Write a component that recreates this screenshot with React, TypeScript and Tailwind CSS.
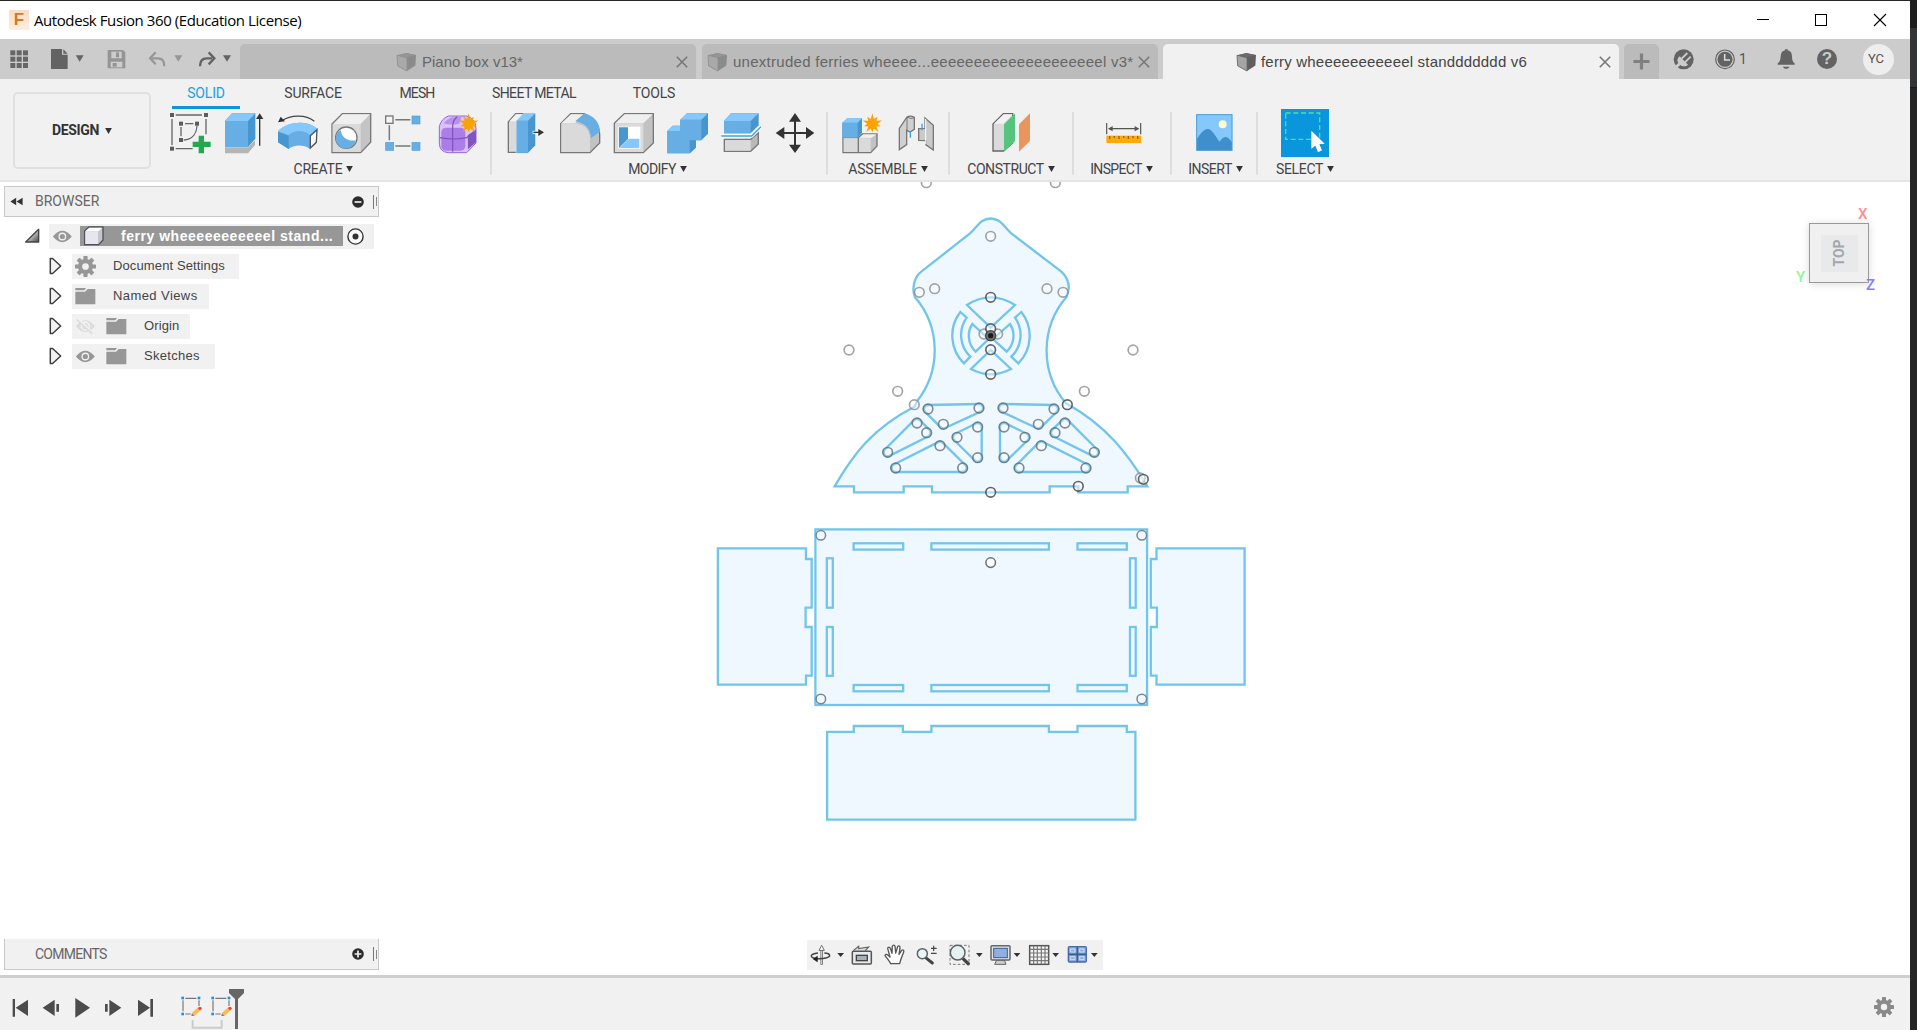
import React from "react";

type SvgProps = { box: string; className: string; children: React.ReactNode };

const Svg = ({ box, className, children }: SvgProps) => (
  <svg viewBox={box} className={`block shrink-0 ${className}`} fill="none">
    {children}
  </svg>
);

const Caret = () => (
  <svg viewBox="0 0 9 8" className="block h-[6px] w-[7px] shrink-0 fill-[#333]">
    <path d="M0 0H9L4.5 8Z" />
  </svg>
);

/* ---------- title bar ---------- */

const TitleBar = () => (
  <header className="flex h-[38px] shrink-0 items-center bg-white">
    <div className="ml-[9px] flex h-5 w-5 items-center justify-center bg-gradient-to-b from-[#fadcc2] to-[#fdeee2]">
      <span className="pb-px text-[17px] leading-[18px] font-bold text-[#d07a2c]">F</span>
    </div>
    <span className="ml-[5px] font-['Open_Sans','Noto_Sans',sans-serif] text-[15px] tracking-[-0.42px] whitespace-pre text-black">
      Autodesk Fusion 360 (Education License)
    </span>
    <div className="ml-auto flex items-center">
      <Svg box="0 0 59 38" className="h-[38px] w-[59px]">
        <path d="M23 18.5H35" stroke="#000" />
      </Svg>
      <Svg box="0 0 59 38" className="h-[38px] w-[59px]">
        <rect x="22.5" y="13.5" width="11" height="11" stroke="#000" />
      </Svg>
      <Svg box="0 0 58 38" className="h-[38px] w-[58px]">
        <path d="M22 13L34 25M34 13L22 25" stroke="#000" strokeWidth="1.1" />
      </Svg>
    </div>
  </header>
);

/* ---------- document tabs ---------- */

const CubeIcon = ({ active }: { active?: boolean }) => (
  <Svg box="827 63 63 62" className="h-[20px] w-[21px]">
    <path d="M829 73L858 66L888 72L886 105L860 122L831 106Z" fill={active ? "#5f5f5f" : "#8b8b8b"} />
    <path d="M829 73L860 81L860 122L831 106Z" fill={active ? "#a5a5a5" : "#a9a9a9"} stroke={active ? "#6b6b6b" : "#909090"} strokeWidth="2.5" />
    <path d="M831 73L858 67L886 72L860 80Z" fill={active ? "#6a6a6a" : "#949494"} />
  </Svg>
);

const CloseX = ({ className }: { className: string }) => (
  <svg viewBox="0 0 12 12" className={`h-3 w-3 shrink-0 ${className}`}>
    <path d="M0.8 0.8L11.2 11.2M11.2 0.8L0.8 11.2" strokeWidth="1.6" />
  </svg>
);

const QuickTools = () => (
  <div className="flex h-[40px] w-[240px] shrink-0 items-center">
    <Svg box="0 118 120 118" className="h-[40px] w-[40px]">
      {[151, 170, 189].map((y) =>
        [31, 50, 69].map((x) => <rect key={`${x}-${y}`} x={x} y={y} width="15" height="15" fill="#666" />)
      )}
    </Svg>
    <Svg box="120 118 168 118" className="h-[40px] w-[56px]">
      <path d="M153 147H186V164H203V207H153Z" fill="#636363" />
      <path d="M190 148L203 161H190Z" fill="#636363" />
      <path d="M227 166H251L239 185Z" fill="#666" />
    </Svg>
    <Svg box="288 118 132 118" className="h-[40px] w-[44px]">
      <path d="M323 150H369L376 157V205H323Z" fill="#949494" />
      <rect x="334" y="155" width="31" height="20" fill="#ccc" />
      <rect x="348" y="157" width="9" height="15" fill="#949494" />
      <rect x="332" y="185" width="35" height="17" fill="#ccc" />
      <rect x="338" y="189" width="12" height="11" fill="#949494" />
    </Svg>
    <Svg box="420 118 150 118" className="h-[40px] w-[50px]">
      <path d="M455 175H474C488 175 493 186 493 199" stroke="#969696" strokeWidth="6.5" />
      <path d="M467 157L450 175L467 193" stroke="#969696" strokeWidth="6.5" />
      <path d="M523 166H547L535 185Z" fill="#969696" />
    </Svg>
    <Svg box="570 118 150 118" className="h-[40px] w-[50px]">
      <path d="M636 175H620C606 175 600 184 600 199" stroke="#636363" strokeWidth="7" />
      <path d="M626 157L643 175L626 193" stroke="#636363" strokeWidth="7" />
      <path d="M669 166H693L681 185Z" fill="#636363" />
    </Svg>
  </div>
);

const TabBar = () => (
  <nav className="flex h-[40px] shrink-0 items-stretch bg-[#ccc]">
    <QuickTools />
    <div className="mt-[5px] flex w-[456px] shrink-0 items-center rounded-t-[5px] bg-[#bbb] pl-[156px] text-[#666]">
      <CubeIcon />
      <span className="ml-[5px] pt-[2px] text-[15px] whitespace-pre">Piano box v13*</span>
      <CloseX className="mr-[8px] ml-auto stroke-[#777]" />
    </div>
    <div className="mt-[5px] ml-[6px] flex w-[456px] shrink-0 items-center rounded-t-[5px] bg-[#bbb] pl-[5px] text-[#666]">
      <CubeIcon />
      <span className="ml-[5px] pt-[2px] text-[15px] tracking-[0.27px] whitespace-pre">unextruded ferries wheeee...eeeeeeeeeeeeeeeeeeeel v3*</span>
      <CloseX className="mr-[8px] ml-auto stroke-[#777]" />
    </div>
    <div className="mt-[5px] ml-[5px] flex w-[456px] shrink-0 items-center rounded-t-[5px] bg-[#f1f1f1] pl-[73px] text-[#444]">
      <CubeIcon active />
      <span className="ml-[4px] pt-[2px] text-[15px] tracking-[0.19px] whitespace-pre">ferry wheeeeeeeeeeel standdddddd v6</span>
      <CloseX className="mr-[8px] ml-auto stroke-[#777]" />
    </div>
    <div className="mt-[5px] ml-[5px] flex w-[35px] shrink-0 items-center justify-center rounded-t-[5px] bg-[#bbb]">
      <Svg box="0 0 18 18" className="h-[17px] w-[17px]">
        <path d="M9 0.5V17.5M0.5 9H17.5" stroke="#808080" strokeWidth="3.4" />
      </Svg>
    </div>
    <div className="flex items-center">
      <Svg box="666 118 150 118" className="h-[40px] w-[50px]">
        <circle cx="740" cy="178" r="30" fill="#636363" />
        <path d="M728 169L753 194C747 201 735 200 730 195L718 206L712 200L724 189C719 183 721 174 728 169Z" fill="#ccc" />
        <path d="M734 176L751 159M744 187L761 170" stroke="#ccc" strokeWidth="5.5" />
      </Svg>
      <Svg box="816 118 90 118" className="h-[40px] w-[30px]">
        <circle cx="864" cy="178" r="28" stroke="#636363" strokeWidth="3.5" />
        <circle cx="864" cy="178" r="22.5" fill="#636363" />
        <path d="M863 162V180H879" stroke="#ddd" strokeWidth="4.5" />
      </Svg>
      <span className="w-[31px] font-['Roboto',sans-serif] text-[14px] text-[#555]">1</span>
      <Svg box="999 118 105 118" className="h-[40px] w-[35px]">
        <path d="M1022 194V190C1032 184 1030 172 1032 162C1034 154 1041 153 1044 151V148H1052V151C1056 153 1062 154 1064 162C1066 172 1064 184 1073 190V194Z" fill="#636363" />
        <path d="M1038 200H1057C1055 208 1040 208 1038 200Z" fill="#636363" />
      </Svg>
      <div className="ml-[12px] flex h-5 w-5 items-center justify-center rounded-full bg-[#636363] text-[17px] leading-5 font-bold text-[#ccc]">?</div>
      <div className="ml-[26px] flex h-[31px] w-[31px] items-center justify-center rounded-full bg-[#eee] pr-[5px] font-['Roboto',sans-serif] text-[13px] text-[#555]">
        YC
      </div>
    </div>
  </nav>
);

/* ---------- ribbon ---------- */

const RIcon = ({ x, y = 245, children }: { x: number; y?: number; children: React.ReactNode }) => (
  <Svg box={`${x} ${y} 162 126`} className="h-[42px] w-[54px]">
    {children}
  </Svg>
);

const Star = ({ x, y }: { x: number; y: number }) => {
  const pts = Array.from({ length: 20 }, (_, i) => {
    const r = i % 2 ? 15 : i % 4 ? 26 : 31;
    const a = (i * Math.PI) / 10 - Math.PI / 2;
    return `${x + r * Math.cos(a)},${y + r * Math.sin(a)}`;
  }).join(" ");
  return <polygon points={pts} fill="#f9a200" />;
};

type GroupProps = { label: string; className: string; labelClass?: string; children: React.ReactNode };

const Group = ({ label, className, labelClass = "tracking-[-0.2px]", children }: GroupProps) => (
  <section className={`flex shrink-0 flex-col ${className}`}>
    <div className="flex h-[48px] items-center justify-center">{children}</div>
    <div className="mt-[3px] flex items-center justify-center gap-[4px] font-['Roboto',sans-serif] text-[14px] leading-[18px] text-[#444]">
      <span className={`whitespace-pre ${labelClass}`}>{label}</span>
      <Caret />
    </div>
  </section>
);

const Sep = ({ className = "" }: { className?: string }) => (
  <div className={`mt-[3px] h-[63px] w-[2px] shrink-0 bg-[#dedede] ${className}`} />
);

const CreateIcons = () => (
  <>
    <RIcon x={486} y={335}>
      <path d="M527 344H606M516 356V434M618 356V402M527 445H578" stroke="#666" strokeWidth="4" />
      <path d="M555 370H580M543 380V408M591 376C590 396 580 417 551 419" stroke="#666" strokeWidth="4" />
      {[[516, 344], [618, 344], [516, 445], [543, 370], [591, 370], [543, 419]].map(([x, y]) => (
        <rect key={`${x}${y}`} x={x - 6} y={y - 6} width="12" height="12" fill="#5c5c5c" />
      ))}
      <path d="M604 406V459M578 432H632" stroke="#22a84f" strokeWidth="16" />
    </RIcon>
    <RIcon x={648} y={335}>
      <path d="M675 441H744L765 420V434L744 459H675Z" fill="#b5b5b5" />
      <path d="M675 362L696 339H766V415L744 440H675Z" fill="#4896cf" />
      <rect x="675" y="362" width="69" height="78" fill="#66aee4" />
      <path d="M675 362L696 339H766L744 362Z" fill="#85c8fb" />
      <path d="M779 436V346" stroke="#333" strokeWidth="4" />
      <path d="M768 356L779 339L790 356Z" fill="#333" />
    </RIcon>
    <RIcon x={810} y={335}>
      <path d="M846 361C870 345 915 340 943 363" stroke="#444" strokeWidth="4" />
      <path d="M834 366L842 349L855 363Z" fill="#333" />
      <path d="M834 393C860 362 925 358 952 386L946 432L929 445C912 432 880 432 866 446L834 426Z" fill="#66aee4" />
      <path d="M834 393C860 362 925 358 952 386L930 404C910 388 885 388 866 404Z" fill="#85c8fb" />
      <path d="M834 395L866 406V446L834 426Z" fill="#4896cf" />
      <path d="M931 406L951 388L949 426L931 443Z" fill="#fafafa" stroke="#555" strokeWidth="4" />
    </RIcon>
    <RIcon x={972} y={335}>
      <path d="M996 371L1027 340H1112V426L1082 457H996Z" fill="#c4c4c4" stroke="#777" strokeWidth="4" />
      <path d="M1000 371L1028 342H1110L1082 371Z" fill="#efefef" />
      <rect x="998" y="371" width="84" height="84" fill="#dadada" />
      <circle cx="1039" cy="412" r="32" fill="#fff" stroke="#777" strokeWidth="4" />
      <path d="M1022 389A30 30 0 1 0 1067 420C1044 424 1024 412 1022 389Z" fill="#66aee4" />
    </RIcon>
    <RIcon x={1134} y={335}>
      <path d="M1186 358H1231M1168 375V420M1186 437H1231" stroke="#777" strokeWidth="4.5" />
      <rect x="1157" y="347" width="22" height="22" fill="#f5f5f5" stroke="#777" strokeWidth="4" />
      <g fill="#66aee4" stroke="#569ed5" strokeWidth="2">
        <rect x="1236" y="347" width="24" height="24" />
        <rect x="1157" y="426" width="24" height="24" />
        <rect x="1236" y="426" width="24" height="24" />
      </g>
    </RIcon>
    <RIcon x={1296} y={335}>
      <path d="M1345 347H1400Q1428 355 1428 385V428L1400 457H1345Q1318 455 1318 428V378Q1324 355 1345 347Z" fill="#d9c3f8" stroke="#9468d2" strokeWidth="3" />
      <path d="M1403 405L1428 388V426L1404 447Z" fill="#8254c0" />
      <rect x="1324" y="382" width="72" height="69" rx="14" fill="#ab7de8" />
      <path d="M1330 369Q1345 354 1358 351H1384L1378 370Q1352 376 1330 369Z" fill="#b890ee" />
      <path d="M1372 349Q1358 358 1358 380V454M1319 412Q1360 420 1400 412L1427 390" stroke="#8052bd" strokeWidth="3.5" />
      <Star x={1406} y={370} />
    </RIcon>
  </>
);

const ModifyIcons = () => (
  <>
    <RIcon x={54}>
      <path d="M85 275L107 250H130V366H85Z" fill="#dadada" stroke="#777" strokeWidth="4" />
      <path d="M88 273L108 252H130L112 273Z" fill="#f2f2f2" />
      <path d="M109 271L131 249H167V345L144 369H109Z" fill="#4896cf" stroke="#f5f5f5" strokeWidth="2" />
      <rect x="110" y="272" width="34" height="95" fill="#66aee4" />
      <path d="M110 271L131 249H166L144 271Z" fill="#85c8fb" />
      <path d="M158 306H180" stroke="#fff" strokeWidth="9" />
      <path d="M160 306H180" stroke="#333" strokeWidth="4" />
      <path d="M175 296L192 306L175 317Z" fill="#333" />
    </RIcon>
    <RIcon x={216}>
      <path d="M242 280L272 250H312Q356 268 359 312V338L330 367H242Z" fill="#c2c2c2" stroke="#777" strokeWidth="4" />
      <path d="M244 279L273 252H312L286 278Z" fill="#efefef" />
      <path d="M244 279H286Q328 285 330 324V365H244Z" fill="#dadada" />
      <path d="M286 273L313 249Q358 262 360 304L333 323Q330 280 286 273Z" fill="#66aee4" />
    </RIcon>
    <RIcon x={378}>
      <path d="M403 279L433 250H520V338L490 367H403Z" fill="#c2c2c2" stroke="#777" strokeWidth="4" />
      <path d="M406 279L434 252H518L490 279Z" fill="#efefef" />
      <rect x="405" y="279" width="85" height="86" fill="#dadada" />
      <rect x="415" y="289" width="66" height="66" fill="#fff" />
      <path d="M417 291H444V326L417 353Z" fill="#4896cf" />
      <path d="M419 353L446 325H478V353Z" fill="#85c8fb" />
    </RIcon>
    <RIcon x={540}>
      <path d="M562 302L578 286H601V268L621 249H684V310L664 330H648V352L630 369H562Z" fill="#4896cf" />
      <path d="M562 302H601V268H664V330H629V369H562Z" fill="#66aee4" />
      <path d="M562 302L578 286H601V302ZM601 268L621 249H684L664 268Z" fill="#85c8fb" />
    </RIcon>
    <RIcon x={702}>
      <path d="M732 272L753 249H836V285L812 309H732Z" fill="#4896cf" />
      <path d="M732 272H812V309H732Z" fill="#66aee4" />
      <path d="M732 272L753 249H836L812 272Z" fill="#85c8fb" />
      <path d="M733 327H812L835 307V341L812 363H733Z" fill="#b9b9b9" stroke="#777" strokeWidth="4" />
      <path d="M735 329H812V361H735Z" fill="#dadada" />
      <path d="M724 317H815L843 289" stroke="#fff" strokeWidth="10" />
      <path d="M724 317H815L843 289" stroke="#3f9ede" strokeWidth="4" />
    </RIcon>
    <RIcon x={864}>
      <path d="M945 265V352M903 308H988" stroke="#333" strokeWidth="6" />
      <path d="M945 248L963 274H927ZM945 368L963 343H927ZM887 308L913 290V326ZM1003 308L978 290V326Z" fill="#333" />
    </RIcon>
  </>
);

const AssembleIcons = () => (
  <>
    <RIcon x={1065}>
      <path d="M1089 322H1135L1147 311H1191V347L1172 367H1089Z" fill="#c2c2c2" stroke="#777" strokeWidth="4" />
      <path d="M1091 324H1134V365H1091ZM1137 324H1172V365H1137Z" fill="#dadada" />
      <path d="M1138 322L1150 312H1190L1174 323Z" fill="#efefef" />
      <path d="M1135 322V367" stroke="#777" strokeWidth="4" />
      <path d="M1087 277L1103 263H1146V308L1133 322H1087Z" fill="#4896cf" />
      <rect x="1087" y="277" width="46" height="45" fill="#66aee4" />
      <path d="M1087 277L1103 263H1147L1133 277Z" fill="#85c8fb" />
      <Star x={1177} y={280} />
    </RIcon>
    <RIcon x={1227}>
      <path d="M1258 294L1281 260Q1291 254 1303 261V297L1290 305L1280 300V343L1258 358Z" fill="#d0d0d0" stroke="#777" strokeWidth="4" />
      <path d="M1281 260Q1292 268 1303 262M1281 260V300" stroke="#777" strokeWidth="3" />
      <path d="M1335 263L1360 285V359L1337 343V331L1316 330V295L1335 294Z" fill="#cacaca" stroke="#777" strokeWidth="4" />
      <path d="M1337 266V342" stroke="#fff" strokeWidth="3" />
      <path d="M1291 302V322M1326 280V300" stroke="#3f9ede" strokeWidth="4" />
    </RIcon>
  </>
);

const RIBBON_TABS: [string, string][] = [
  ["SURFACE", "w-[146px] tracking-[-0.2px]"],
  ["MESH", "w-[62px] tracking-[-0.9px]"],
  ["SHEET METAL", "w-[172px] tracking-[-0.6px]"],
  ["TOOLS", "w-[68px] tracking-[-0.2px]"],
];

const Ribbon = () => (
  <div className="flex h-[103px] shrink-0 border-b-2 border-[#e4e4e4] bg-[#f1f1f1]">
    <button className="mt-[13px] ml-[13px] flex h-[77px] w-[138px] shrink-0 items-center justify-center gap-[6px] rounded-[5px] border-2 border-[#e0e0e0] font-['Roboto',sans-serif] text-[14px] font-bold text-[#333]">
      <span className="tracking-[-0.35px] whitespace-pre">DESIGN</span>
      <Caret />
    </button>
    <div className="ml-[11px] flex flex-col">
      <div className="flex h-[30px] items-stretch pl-[10px] font-['Roboto',sans-serif] text-[14px] text-[#444]">
        <div className="flex w-[68px] items-center justify-center border-b-[3px] border-[#0a96d9] pt-px tracking-[-0.2px] text-[#1ba0df]">
          SOLID
        </div>
        {RIBBON_TABS.map(([name, w]) => (
          <div key={name} className={`flex items-center justify-center border-b-[3px] border-transparent pt-px whitespace-pre ${w}`}>
            {name}
          </div>
        ))}
      </div>
      <div className="flex">
        <Group label="CREATE" className="w-[324px]" labelClass="-ml-px tracking-[-0.25px]"><CreateIcons /></Group>
        <Sep className="ml-[4px]" />
        <Group label="MODIFY" className="ml-[6px] w-[324px]" labelClass="-ml-[5px] tracking-[-0.55px]"><ModifyIcons /></Group>
        <Sep className="ml-[4px]" />
        <Group label="ASSEMBLE" className="ml-[7px] w-[108px]" labelClass="-ml-[2px] tracking-[-0.2px]"><AssembleIcons /></Group>
        <Sep className="ml-[5px]" />
        <Group label="CONSTRUCT" className="w-[122px]" labelClass="tracking-[-0.42px]">
          <RIcon x={72}>
            <path d="M99 281L130 250H158V338L130 362H99Z" fill="#dadada" stroke="#666" strokeWidth="4" />
            <path d="M102 280L131 252H158L130 280Z" fill="#f2f2f2" />
            <path d="M132 282L165 249V332L132 364Z" fill="#56c47e" />
            <path d="M177 282L210 249V332L177 364Z" fill="#e8965c" />
          </RIcon>
        </Group>
        <Sep />
        <Group label="INSPECT" className="w-[97px]" labelClass="-ml-[2px] tracking-[-0.65px]">
          <RIcon x={405}>
            <path d="M437 278V312M539 278V312M445 295H531" stroke="#555" strokeWidth="3.5" />
            <path d="M441 295L455 287V303ZM535 295L521 287V303Z" fill="#555" />
            <rect x="436" y="316" width="104" height="22" fill="#ffa90a" />
            <path d="M446 317V326M460 317V323M474 317V326M488 317V323M502 317V326M516 317V323M530 317V326" stroke="#9a6500" strokeWidth="4" />
          </RIcon>
        </Group>
        <Sep className="-ml-px" />
        <Group label="INSERT" className="w-[84px]" labelClass="ml-[3px] tracking-[-0.5px]">
          <RIcon x={681}>
            <rect x="709" y="252" width="108" height="109" fill="#85c8fb" />
            <path d="M711 326C728 300 735 296 745 296C758 299 766 318 779 334C787 322 792 320 797 320C806 321 811 330 816 336V360H711Z" fill="#3f8fcb" />
            <circle cx="788" cy="282" r="12" fill="#ffffd0" />
            <rect x="710" y="253" width="106" height="107" stroke="#4f9dd4" strokeWidth="3" />
          </RIcon>
        </Group>
        <Sep />
        <Group label="SELECT" className="w-[94px]" labelClass="tracking-[-0.3px]">
          <Svg box="963 237 144 144" className="h-[48px] w-[48px]">
            <rect x="963" y="237" width="144" height="144" fill="#0a96dc" />
            <rect x="977" y="249" width="102" height="79" stroke="#57dd9c" strokeWidth="4" strokeDasharray="15 8" />
            <path d="M1054 302V356L1066 347L1074 367L1086 361L1078 343L1094 341Z" fill="#fff" />
          </Svg>
        </Group>
      </div>
    </div>
  </div>
);

/* ---------- browser panel ---------- */

const Eye = ({ className }: { className: string }) => (
  <Svg box="157 145 63 46" className="h-[15px] w-[21px]">
    <g className={className}>
      <path d="M159 168Q188 133 217 168Q188 203 159 168Z" fill="currentColor" />
      <circle cx="188" cy="168" r="10" stroke="#f1f1f1" strokeWidth="4" />
    </g>
  </Svg>
);

const EyeOff = () => (
  <Svg box="225 415 63 50" className="h-[17px] w-[21px]">
    <path d="M228 439Q256 404 285 439Q256 474 228 439Z" fill="#dcdcdc" />
    <circle cx="256" cy="439" r="12" stroke="#f1f1f1" strokeWidth="5" />
    <path d="M234 417L281 464" stroke="#f1f1f1" strokeWidth="8" />
    <path d="M230 419L277 462" stroke="#dcdcdc" strokeWidth="5" />
  </Svg>
);

const Folder = () => (
  <Svg box="225 321 63 54" className="h-[18px] w-[21px]">
    <path d="M226 324H258L253 331H226ZM226 335H255L263 327H286V373H226Z" fill="#979797" />
  </Svg>
);

const Gear = ({ className }: { className: string }) => (
  <svg viewBox="-10 -10 20 20" className={`block shrink-0 ${className}`} fill="none">
    {[0, 45, 90, 135].map((a) => (
      <rect key={a} x="-2" y="-10" width="4" height="20" rx="0.6" fill="currentColor" transform={`rotate(${a})`} />
    ))}
    <circle r="7.2" fill="currentColor" />
    <circle r="3.2" fill="#f1f1f1" />
  </svg>
);

const Expander = () => (
  <Svg box="145 232 40 54" className="mr-[10px] h-[18px] w-[13px]">
    <path d="M149 236H156L181 259L156 282H149Z" fill="#f2f2f2" stroke="#3d3d3d" strokeWidth="4.5" strokeLinejoin="round" />
  </Svg>
);

const TreeRow = ({ className, children }: { className: string; children: React.ReactNode }) => (
  <div className="flex h-[30px] items-center pl-[49px]">
    <Expander />
    <div className={`flex h-[25px] items-center bg-[#f1f1f1] pl-[3px] ${className}`}>{children}</div>
  </div>
);

const PanelGrip = ({ plus }: { plus?: boolean }) => (
  <div className="ml-auto flex items-center">
    <Svg box="0 0 12 12" className="h-3 w-3">
      <circle cx="6" cy="6" r="5.8" fill="#2b2b2b" />
      <path d={plus ? "M2.6 6H9.4M6 2.6V9.4" : "M2.6 6H9.4"} stroke="#f1f1f1" strokeWidth="1.7" />
    </Svg>
    <div className="mr-px ml-[9px] flex items-center gap-[2px]">
      <div className="h-[14px] w-px bg-[#777]" />
      <div className="h-[9px] w-px bg-[#888]" />
    </div>
  </div>
);

const Browser = () => (
  <aside className="relative w-[379px] pt-[4px]">
    <div className="ml-[4px] flex h-[31px] items-center border border-[#c9c9c9] bg-[#f1f1f1]">
      <Svg box="30 52 40 28" className="ml-[5px] h-[9px] w-[13px]">
        <path d="M31 66L49 54V78ZM50 66L69 54V78Z" fill="#333" />
      </Svg>
      <span className="ml-[12px] font-['Roboto',sans-serif] text-[14px] text-[#666]">BROWSER</span>
      <PanelGrip />
    </div>
    <div className="mt-[4px] flex h-[30px] items-center pl-[24px]">
      <Svg box="72 145 48 48" className="h-[16px] w-[16px]">
        <defs>
          <linearGradient id="open" x1="0" y1="0" x2="1" y2="1">
            <stop offset="0.3" stopColor="#eee" />
            <stop offset="1" stopColor="#444" />
          </linearGradient>
        </defs>
        <path d="M116 149V187H77Z" fill="url(#open)" stroke="#444" strokeWidth="4" strokeLinejoin="round" />
      </Svg>
      <div className="ml-[9px] flex h-[25px] w-[325px] items-center bg-[#f1f1f1] pl-[3px]">
        <Eye className="text-[#979797]" />
        <div className="ml-[7px] flex h-[20px] w-[263px] items-center bg-[#979797]">
          <Svg box="250 139 63 60" className="ml-[3px] h-[20px] w-[21px]">
            <path d="M255 154L268 142H310V181L297 195H255Z" fill="#c5c5cc" stroke="#50505a" strokeWidth="4" strokeLinejoin="round" />
            <path d="M257 155L269 144H308L296 155Z" fill="#fff" />
            <rect x="257" y="155" width="38" height="38" fill="#e6e6ee" />
          </Svg>
          <span className="ml-[17px] text-[14px] font-bold tracking-[0.53px] whitespace-pre text-white">ferry wheeeeeeeeeeel stand...</span>
        </div>
        <Svg box="0 0 17 17" className="ml-[4px] h-[17px] w-[17px]">
          <circle cx="8.5" cy="8.5" r="7.6" fill="#fafafa" stroke="#333" strokeWidth="1.4" />
          <circle cx="8.5" cy="8.5" r="3" fill="#333" />
        </Svg>
      </div>
    </div>
    <div className="text-[13px] text-[#444]">
      <TreeRow className="w-[167px]">
        <Gear className="h-[21px] w-[21px] text-[#979797]" />
        <span className="ml-[17px] tracking-[0.12px] whitespace-pre">Document Settings</span>
      </TreeRow>
      <TreeRow className="w-[137px]">
        <Folder />
        <span className="ml-[17px] tracking-[0.42px] whitespace-pre">Named Views</span>
      </TreeRow>
      <TreeRow className="w-[118px]">
        <EyeOff />
        <div className="ml-[10px]"><Folder /></div>
        <span className="ml-[17px] tracking-[0.1px]">Origin</span>
      </TreeRow>
      <TreeRow className="w-[143px]">
        <Eye className="text-[#979797]" />
        <div className="ml-[10px]"><Folder /></div>
        <span className="ml-[17px] tracking-[0.3px]">Sketches</span>
      </TreeRow>
    </div>
  </aside>
);

/* ---------- sketch geometry ---------- */

type Pt = [number, number];

/* Outline of a triangle whose corners are rounded by circles of radius r. */
const roundedTriangle = (input: Pt[], r: number): string => {
  const [a, b, c] = input;
  const area = (b[0] - a[0]) * (c[1] - a[1]) - (c[0] - a[0]) * (b[1] - a[1]);
  const p = area > 0 ? input : [a, c, b];
  let d = "";
  for (let i = 0; i < 3; i++) {
    const s = p[i];
    const e = p[(i + 1) % 3];
    const len = Math.hypot(e[0] - s[0], e[1] - s[1]);
    const nx = ((e[1] - s[1]) / len) * r;
    const ny = (-(e[0] - s[0]) / len) * r;
    d += i === 0 ? `M${s[0] + nx} ${s[1] + ny}` : `A${r} ${r} 0 0 1 ${s[0] + nx} ${s[1] + ny}`;
    d += `L${e[0] + nx} ${e[1] + ny}`;
    if (i === 2) d += `A${r} ${r} 0 0 1 ${d.slice(1, d.indexOf("L"))}Z`;
  }
  return d;
};

const TRUSSES: Pt[][] = [
  [[324, 687], [477, 684], [370, 733]],
  [[291, 729], [320, 758], [203, 817]],
  [[473, 741], [411, 772], [473, 833]],
  [[360, 797], [227, 864], [428, 864]],
  [[702, 687], [549, 684], [655, 733]],
  [[735, 729], [705, 758], [823, 817]],
  [[552, 741], [615, 772], [552, 833]],
  [[664, 797], [798, 864], [597, 864]],
];

const CONSTRUCTION: Pt[] = [
  [319, 8], [706, 8], [512, 169], [298, 337], [344, 326], [681, 326], [729, 337],
  [87, 510], [939, 510], [233, 634], [793, 634], [283, 674], [961, 894], [492, 462], [533, 462],
];

const ANCHORS: Pt[] = [[512, 352], [512, 446], [512, 509], [512, 583], [512, 937], [775, 919], [742, 674], [970, 898]];

const SLOTS: [number, number, number, number][] = [
  [853.6, 543.3, 49.6, 6.3], [931.4, 543.3, 117.5, 6.3], [1077.5, 543.3, 49.3, 6.3],
  [853.6, 685, 49.6, 6.3], [931.4, 685, 117.5, 6.3], [1077.5, 685, 49.3, 6.3],
  [826.8, 558.3, 6, 49.4], [1130, 558.3, 5.7, 49.4], [826.8, 627, 6, 48.8], [1130, 627, 5.7, 48.8],
];

const Sketch = () => (
  <svg viewBox="0 182 1910 793" className="absolute inset-0 h-[793px] w-[1910px]">
    <g transform="translate(820 180) scale(0.33333)" stroke="#72c5ea" strokeWidth="7" fill="none" strokeLinejoin="miter">
      <path
        fill="#f0f8ff"
        d="M44 919C100 822 158 745 283 680Q286 677 290 665A246 246 0 0 0 284 350C275 325 283 290 304 275L450 160C466 146 472 134 485 124Q512 107 539 124C552 134 558 146 574 160L724 275C748 297 750 325 740 350A246 246 0 0 0 738 670C862 738 925 825 982 919H923V937H775V919H689V937H336V919H251V937H102V919Z"
      />
      <path d="M441 375Q512 329 585 375L512 443ZM453 567Q512 599 573 567L512 510Z" />
      <path d="M421 396L440 413A90 90 0 0 0 451 530L432 550A116 116 0 0 1 421 396ZM604 396L585 413A90 90 0 0 1 574 530L595 550A116 116 0 0 0 604 396Z" />
      <path d="M457 432A65 65 0 0 0 467 515L506 477ZM570 432A65 65 0 0 1 560 515L519 477Z" />
      {TRUSSES.map((t, i) => (
        <path key={i} d={roundedTriangle(t, 12)} />
      ))}
      <g strokeWidth="5" fill="#fff" fillOpacity="0.45">
        {CONSTRUCTION.map(([x, y]) => (
          <circle key={`${x},${y}`} cx={x} cy={y} r="14.5" stroke="#8c8c8c" strokeOpacity="0.8" />
        ))}
        {TRUSSES.flat().map(([x, y]) => (
          <circle key={`${x},${y}`} cx={x} cy={y} r="14.5" stroke="#5c676d" strokeOpacity="0.75" fillOpacity="0.2" />
        ))}
        {ANCHORS.map(([x, y]) => (
          <circle key={`${x},${y}`} cx={x} cy={y} r="14.5" stroke="#4a4a4a" strokeOpacity="0.85" />
        ))}
      </g>
      <circle cx="512" cy="467" r="15" fill="#777" stroke="#444" strokeWidth="4" />
      <circle cx="512" cy="467" r="8" fill="#1c1c1c" stroke="none" />
    </g>
    <g stroke="#72c5ea" strokeWidth="2.3" fill="#f0f8ff">
      <path d="M717.9 548.3H806V559H811.7V607.7H805.6V627H811.7V675.7H806V684.7H717.9Z" />
      <path d="M1244.6 548.3H1156.5V559H1150.8V607.7H1156.9V627H1150.8V675.7H1156.5V684.7H1244.6Z" />
      <path d="M827.1 731.8H853.8V726H902.9V731.8H931.4V726H1048.9V731.8H1077.5V726H1126.8V731.8H1135.4V819.6H827.1Z" />
      <rect x="815.4" y="529.4" width="331.7" height="175.6" />
      {SLOTS.map(([x, y, w, h]) => (
        <rect key={`${x},${y}`} x={x} y={y} width={w} height={h} />
      ))}
      <g strokeWidth="1.5" fill="none">
        {[[820.8, 535.3], [1141.8, 535.3], [820.8, 699], [1141.8, 699]].map(([x, y]) => (
          <circle key={`${x},${y}`} cx={x} cy={y} r="4.8" stroke="#7a878e" />
        ))}
        <circle cx="990.7" cy="562.6" r="4.8" stroke="#6d6d6d" fill="#fff" fillOpacity="0.5" />
      </g>
    </g>
  </svg>
);

/* ---------- view cube ---------- */

const ViewCube = () => (
  <div className="absolute top-[24px] right-[36px] h-[88px] w-[84px] font-['Roboto',sans-serif] text-[15px] leading-4 font-medium">
    <span className="absolute top-0 left-[68px] text-[#ff8f8f]">X</span>
    <span className="absolute top-[63px] left-[6px] text-[#90f79a]">Y</span>
    <div className="absolute top-[17px] left-[19px] flex h-[60px] w-[60px] items-center justify-center border border-[#999] bg-[#f0f0f0] shadow-[0_1px_8px_rgba(0,0,0,0.15)]">
      <div className="flex h-[37px] w-[37px] items-center justify-center bg-[#e8e9eb]">
        <span className="-rotate-90 text-[14px] font-bold text-[#a3a7ab]">TOP</span>
      </div>
    </div>
    <span className="absolute top-[71px] left-[76px] text-[#8080ff]">Z</span>
  </div>
);

/* ---------- navigation toolbar ---------- */

const NavBar = () => (
  <div className="flex h-[30px] w-[296px] items-center bg-[#f1f1f1]">
    <Svg box="51 30 120 90" className="h-[30px] w-[40px]">
      <path d="M95 104V58" stroke="#555" strokeWidth="7" />
      <path d="M95 102V56" stroke="#fff" strokeWidth="2.5" />
      <path d="M87 61L95 46L103 61Z" fill="#fff" stroke="#555" strokeWidth="2.5" />
      <path d="M84 69C58 72 58 84 80 86C100 88 120 82 119 77C118 71 108 69 103 69" stroke="#444" strokeWidth="4.5" />
      <path d="M68 87L83 77V97Z" fill="#222" />
      <path d="M142 69H162L152 81Z" fill="#333" />
    </Svg>
    <Svg box="171 30 96 90" className="h-[30px] w-[32px]">
      <path d="M190 62L206 49V56L236 51L226 62" fill="#ddd" stroke="#666" strokeWidth="3.5" />
      <rect x="187" y="64" width="57" height="38" rx="3" fill="#e8eaec" stroke="#555" strokeWidth="4.5" />
      <rect x="199" y="76" width="33" height="16" fill="#aab0b8" stroke="#444" strokeWidth="4" />
    </Svg>
    <Svg box="267 30 96 90" className="h-[30px] w-[32px]">
      <path d="M302 101C297 91 288 82 285 76C288 70 294 74 300 81L293 55C294 50 299 50 301 55L306 70L307 49C309 44 314 44 315 49L317 69L323 50C326 46 331 48 330 53L327 73L335 61C339 58 343 61 341 66L332 90L329 101Z" fill="#fff" stroke="#555" strokeWidth="4" strokeLinejoin="round" />
    </Svg>
    <Svg box="363 30 93 90" className="h-[30px] w-[31px]">
      <path d="M407 83L427 99" stroke="#444" strokeWidth="9" strokeLinecap="round" />
      <circle cx="397" cy="71" r="15" fill="#eaf3f6" stroke="#5c6468" strokeWidth="4.5" />
      <path d="M423 55H440M431 47V63M423 70H440" stroke="#444" strokeWidth="3.5" />
    </Svg>
    <Svg box="456 30 129 90" className="h-[30px] w-[43px]">
      <rect x="480" y="46" width="57" height="57" stroke="#777" strokeWidth="3" strokeDasharray="8 6" />
      <path d="M515 82L535 101" stroke="#444" strokeWidth="10" strokeLinecap="round" />
      <circle cx="503" cy="68" r="22" fill="#e6f1f1" stroke="#5c6468" strokeWidth="4.5" />
      <path d="M558 69H578L568 81Z" fill="#333" />
    </Svg>
    <Svg box="585 30 114 90" className="h-[30px] w-[38px]">
      <path d="M620 90H643L648 103H614Z" fill="#ccc" stroke="#666" strokeWidth="3" />
      <rect x="603" y="47" width="57" height="43" rx="3" fill="#dfe3e8" stroke="#666" strokeWidth="4.5" />
      <rect x="611" y="55" width="41" height="28" fill="#8fb0de" stroke="#3d5f94" strokeWidth="3" />
      <path d="M671 69H691L681 81Z" fill="#333" />
    </Svg>
    <Svg box="699 30 117 90" className="h-[30px] w-[39px]">
      <rect x="719" y="47" width="57" height="56" fill="#f5f5f5" stroke="#555" strokeWidth="4.5" />
      <path d="M731 47V103M742 47V103M754 47V103M765 47V103M719 58H776M719 69H776M719 81H776M719 92H776" stroke="#777" strokeWidth="3.5" />
      <path d="M787 69H807L797 81Z" fill="#333" />
    </Svg>
    <Svg box="816 30 123 90" className="h-[30px] w-[41px]">
      <rect x="835" y="50" width="54" height="46" rx="3" fill="#8aa9dc" stroke="#4a6ba3" strokeWidth="4" />
      <path d="M862 50V96M835 73H889" stroke="#3d5c92" strokeWidth="5" />
      <path d="M842 57H855V66H842ZM869 57H882V66H869ZM842 80H855V89H842ZM869 80H882V89H869Z" stroke="#cfe0fa" strokeWidth="3" />
      <path d="M903 69H923L913 81Z" fill="#333" />
    </Svg>
  </div>
);

/* ---------- timeline ---------- */

const SketchFeature = () => (
  <g>
    <path d="M556 205H589M549 211V244M597 211V228M556 252H572" stroke="#777" strokeWidth="3.5" />
    <path d="M580 253L600 235" stroke="#fdbb4b" strokeWidth="12" />
    <circle cx="600" cy="235" r="5" fill="#f33f4d" />
    <path d="M574 258L576 250L584 257Z" fill="#777" />
    {[[548, 204], [597, 204], [548, 252]].map(([x, y]) => (
      <rect key={`${x}${y}`} x={x - 4} y={y - 4} width="8" height="8" fill="#1791ee" />
    ))}
  </g>
);

const Timeline = () => (
  <footer className="flex h-[55px] shrink-0 border-t-[3px] border-[#cfcfcf] bg-[#f1f1f1]">
    <Svg box="0 144 480 156" className="h-[52px] w-[160px]">
      <g fill="#4c4c4c">
        <path d="M38 207H45V260H38ZM47 233L84 209V258Z" />
        <path d="M128 233L164 209V258ZM169 222H177V245H169Z" />
        <path d="M226 204L270 233L226 263Z" />
        <path d="M315 222H323V245H315ZM328 209L364 233L328 258Z" />
        <path d="M414 209L450 233L414 258ZM451 207H459V260H451Z" />
      </g>
    </Svg>
    <Svg box="480 144 270 156" className="h-[52px] w-[90px]">
      <SketchFeature />
      <g transform="translate(90 0)">
        <SketchFeature />
      </g>
      <path d="M578 270V293H665V270" stroke="#ccc" strokeWidth="6" />
      <path d="M687 177H732V189L714 207V297H705V207L687 189Z" fill="#666" />
    </Svg>
    <div className="mr-[16px] ml-auto flex items-center pt-[6px]">
      <Gear className="h-[20px] w-[20px] text-[#8a8a8a]" />
    </div>
  </footer>
);

export default function App() {
  return (
    <div className="flex h-[1030px] w-[1917px] overflow-hidden bg-[#252526] pt-px font-['Liberation_Sans',Arial,sans-serif]">
      <div className="flex w-[1910px] shrink-0 flex-col">
        <TitleBar />
        <TabBar />
        <Ribbon />
        <main className="relative flex min-h-0 flex-1 flex-col overflow-hidden bg-white">
          <Sketch />
          <Browser />
          <ViewCube />
          <div className="relative mt-auto flex items-end pb-[5px]">
            <div className="ml-[4px] flex h-[31px] w-[375px] items-center border border-t-0 border-[#c9c9c9] bg-[#f1f1f1] pl-[30px]">
              <span className="font-['Roboto',sans-serif] text-[14px] tracking-[-0.75px] text-[#666]">COMMENTS</span>
              <PanelGrip plus />
            </div>
            <div className="ml-[428px]">
              <NavBar />
            </div>
          </div>
        </main>
        <Timeline />
      </div>
      <div className="-mt-px flex flex-1 flex-col bg-[#252526]">
        <div className="h-[28px] bg-[#1e1e1e]" />
        <div className="h-[60px] border-b border-[#1a1a1a] bg-[#333436]" />
      </div>
    </div>
  );
}
